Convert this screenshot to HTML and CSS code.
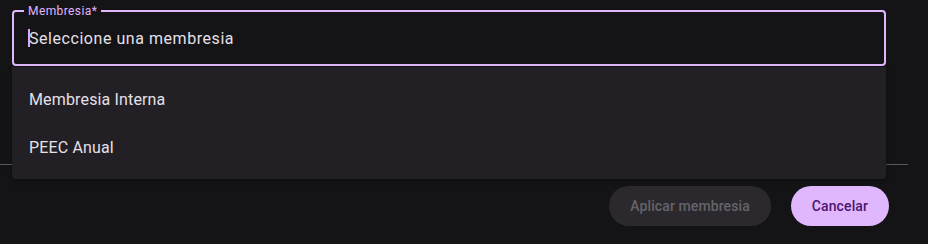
FILE: index.html
```html
<!DOCTYPE html>
<html lang="es">
<head>
<meta charset="utf-8">
<link rel="stylesheet" href="styles.css">
</head>
<body>
<div class="dialog">
  <div class="content">
    <div class="field">
      <span class="field-label">Membresia*</span>
      <div class="field-input"><span class="caret"></span>Seleccione una membresia</div>
      <div class="menu">
        <div class="menu-item">Membresia Interna</div>
        <div class="menu-item">PEEC Anual</div>
      </div>
    </div>
  </div>
  <div class="divider"></div>
  <div class="actions">
    <button class="btn btn-disabled">Aplicar membresia</button>
    <button class="btn btn-primary">Cancelar</button>
  </div>
</div>
</body>
</html>
```

FILE: styles.css
```css
html, body {
  margin: 0;
  padding: 0;
  background: #141316;
  font-family: Roboto, "Noto Sans", sans-serif;
}
.dialog {
  width: 928px;
  height: 244px;
  display: flex;
  flex-direction: column;
}
.content {
  padding: 10px 42px 0 12px;
  height: 154px;
}
.field {
  position: relative;
  height: 56px;
  border: 2px solid #e0b6fc;
  border-radius: 4px;
  box-sizing: border-box;
}
.field-label {
  position: absolute;
  left: 10px;
  top: -9px;
  padding: 0 4px;
  background: #141316;
  color: #e0b6fc;
  font-size: 12px;
  line-height: 16px;
  letter-spacing: 0.4px;
}
.field-input {
  display: flex;
  align-items: center;
  height: 100%;
  padding-left: 14px;
  color: #e6e0e9;
  font-size: 16px;
  letter-spacing: 0.55px;
}
.caret {
  display: inline-block;
  width: 2px;
  height: 18px;
  background: #d9a9ff;
  margin-right: -1px;
}
.menu {
  position: absolute;
  left: -2px;
  right: -2px;
  top: 55px;
  padding: 8px 0;
  background: #221f25;
  border-radius: 0 0 4px 4px;
  box-shadow: 0 2px 4px rgba(0,0,0,0.3);
  z-index: 2;
}
.menu-item {
  height: 48px;
  display: flex;
  align-items: center;
  padding-left: 17px;
  color: #e6e0e9;
  font-size: 16px;
  letter-spacing: 0.15px;
}
.divider {
  width: 908px;
  height: 1px;
  background: #5a575e;
}
.actions {
  display: flex;
  justify-content: flex-end;
  gap: 20px;
  padding: 21px 39px 0 0;
}
.btn {
  height: 40px;
  border: none;
  border-radius: 20px;
  padding: 0 21px;
  font-family: Roboto, "Noto Sans", sans-serif;
  font-size: 14px;
  font-weight: 500;
  letter-spacing: 0.1px;
}
.btn-disabled {
  background: #2b292d;
  color: #666369;
}
.btn-primary {
  background: #e0b6fc;
  color: #4b1771;
}
```
